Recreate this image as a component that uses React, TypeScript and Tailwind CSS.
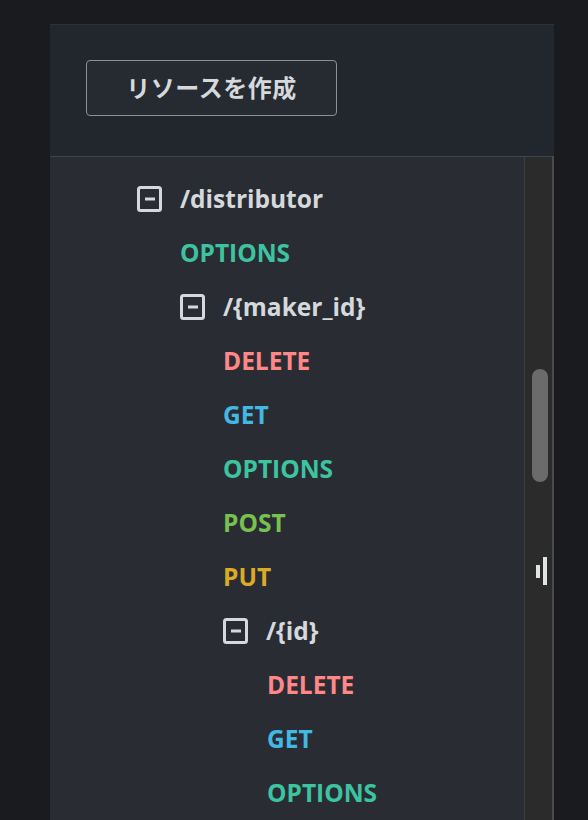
import React from 'react'

type Node =
    | { kind: 'path'; label: string; level: number }
    | { kind: 'method'; label: string; level: number }

const methodColor: Record<string, string> = {
    OPTIONS: 'text-[#3ec3a0]',
    DELETE: 'text-[#ff8787]',
    GET: 'text-[#42b8e2]',
    POST: 'text-[#78c04f]',
    PUT: 'text-[#dcaa27]',
}

const rows: Node[] = [
    { kind: 'path', label: '/distributor', level: 0 },
    { kind: 'method', label: 'OPTIONS', level: 1 },
    { kind: 'path', label: '/{maker_id}', level: 1 },
    { kind: 'method', label: 'DELETE', level: 2 },
    { kind: 'method', label: 'GET', level: 2 },
    { kind: 'method', label: 'OPTIONS', level: 2 },
    { kind: 'method', label: 'POST', level: 2 },
    { kind: 'method', label: 'PUT', level: 2 },
    { kind: 'path', label: '/{id}', level: 2 },
    { kind: 'method', label: 'DELETE', level: 3 },
    { kind: 'method', label: 'GET', level: 3 },
    { kind: 'method', label: 'OPTIONS', level: 3 },
]

const indent = ['pl-[87px]', 'pl-[130px]', 'pl-[173px]', 'pl-[217px]']

const CollapseIcon = () => (
    <svg width="25" height="26" viewBox="0 0 25 26" className="flex-shrink-0">
        <rect x="1.5" y="1.5" width="22" height="23" rx="2" fill="none" stroke="#d5d9dc" strokeWidth="3" />
        <rect x="8" y="11.5" width="10" height="3" fill="#d5d9dc" />
    </svg>
)

const App = () => {
    return (
        <div className="h-screen overflow-hidden bg-[#1a1b1f] pt-[24px] pl-[50px]" style={{ fontFamily: '"Open Sans", "Noto Sans CJK JP", sans-serif' }}>
            <div className="w-[504px] h-full flex flex-col">
                {/* header */}
                <div className="h-[133px] flex-shrink-0 bg-[#22262d] border-t border-[#2c3037] border-b border-b-[#40454c] pt-[35px] pl-[36px]">
                    <button className="w-[251px] h-[56px] rounded-[4px] border border-[#8b9297] bg-[#262a31] text-[#d5d9dc] text-[24px] font-bold tracking-[0.5px]">
                        リソースを作成
                    </button>
                </div>

                {/* tree + scrollbar */}
                <div className="flex-1 flex bg-[#292c33] min-h-0">
                    <div className="flex-1 pt-[15px]">
                        {rows.map((r, i) => (
                            <div key={i} className={`h-[54px] flex items-center ${indent[r.level]}`}>
                                {r.kind === 'path' ? (
                                    <div className="flex items-center gap-[18px]">
                                        <CollapseIcon />
                                        <span className="text-[24.5px] font-bold text-[#d5d9dc] leading-none">{r.label}</span>
                                    </div>
                                ) : (
                                    <span className={`text-[24.5px] font-bold leading-none ${methodColor[r.label]}`}>{r.label}</span>
                                )}
                            </div>
                        ))}
                    </div>
                    <div className="w-[30px] flex-shrink-0 bg-[#2b2b2b] border-l border-[#3e3e3e] border-r-2 border-r-[#4a4a4a] flex flex-col items-start">
                        <div className="mt-[212px] ml-[7px] w-[16px] h-[113px] rounded-full bg-[#6b6b6b]" />
                        <div className="mt-[75px] ml-[11px] flex items-center gap-[3px]">
                            <div className="w-[4px] h-[13px] bg-[#dfe3e3]" />
                            <div className="w-[4px] h-[28px] bg-[#dfe3e3]" />
                        </div>
                    </div>
                </div>
            </div>
        </div>
    )
}

export default App
